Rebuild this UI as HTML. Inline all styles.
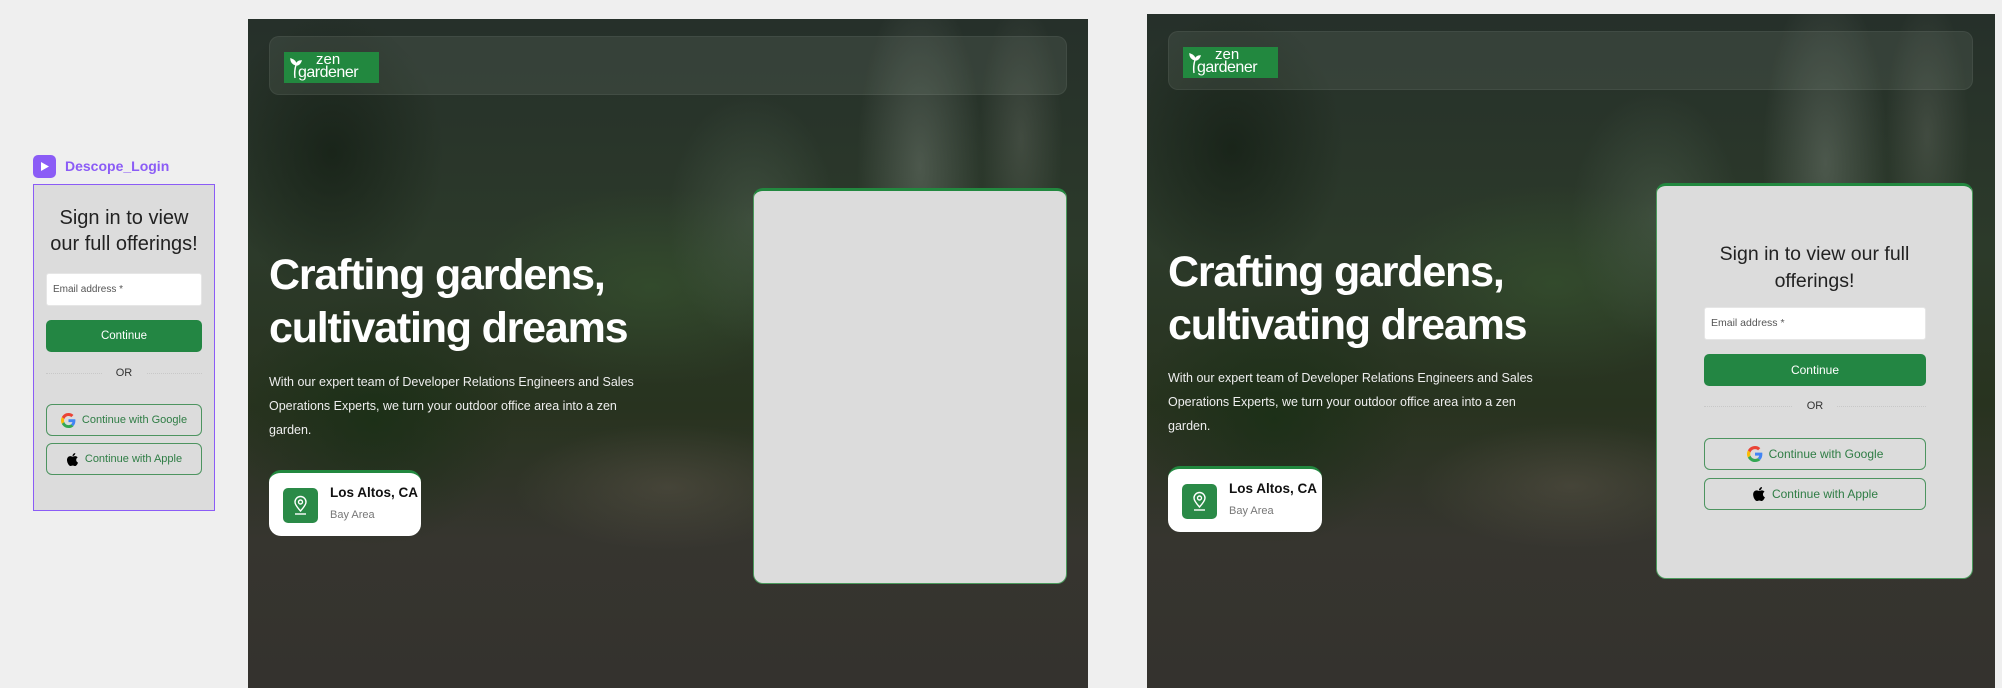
<!DOCTYPE html>
<html><head><meta charset="utf-8"><style>
*{box-sizing:border-box;margin:0;padding:0}
body{width:2002px;height:688px;background:#efefef;position:relative;overflow:hidden;font-family:"Liberation Sans",sans-serif}
.frame{position:absolute;overflow:hidden;
background:
radial-gradient(ellipse 90px 260px at 80% 22%, rgba(140,150,140,.35), transparent 70%),
radial-gradient(ellipse 60px 200px at 92% 18%, rgba(120,125,115,.3), transparent 70%),
radial-gradient(ellipse 120px 180px at 60% 30%, rgba(95,115,95,.35), transparent 70%),
radial-gradient(ellipse 260px 140px at 48% 40%, rgba(60,95,50,.45), transparent 70%),
radial-gradient(ellipse 220px 90px at 50% 70%, rgba(95,88,75,.45), transparent 70%),
radial-gradient(ellipse 200px 180px at 15% 60%, rgba(20,45,18,.6), transparent 70%),
radial-gradient(ellipse 160px 200px at 10% 20%, rgba(15,25,15,.6), transparent 70%),
linear-gradient(180deg,#26302a 0%,#2c3a2a 35%,#28331f 58%,#36352f 78%,#34322e 100%)}
.hdr{position:absolute;left:21px;top:17px;height:59px;border-radius:10px;background:rgba(150,165,150,.14);border:1px solid rgba(255,255,255,.06)}
.logo{position:absolute;left:14px;top:15px;width:95px;height:31px;background:#22883f;color:#fff;font-size:15px;line-height:12px}
.logo .z{position:absolute;left:32px;top:2px}
.logo .g{position:absolute;left:14px;top:15px;font-size:16px;letter-spacing:-.5px}
.h1{position:absolute;left:21px;color:#fff;font-size:43px;line-height:53px;font-weight:bold;letter-spacing:-1.2px}
.p{position:absolute;left:21px;color:#eee;font-size:12.5px;line-height:24px;width:390px}
.loc{position:absolute;left:21px;width:152px;height:66px;background:#fff;border-radius:12px;border-top:3px solid #22883f}
.loc .ic{position:absolute;left:14px;top:15px;width:35px;height:35px;background:#2a8a47;border-radius:5px}
.loc .t{position:absolute;left:61px;top:12px;font-size:13.5px;font-weight:bold;color:#111}
.loc .s{position:absolute;left:61px;top:36px;font-size:11px;color:#777}
.card{position:absolute;background:#dcdcdc;border-radius:10px;border:1px solid #4a9a5c;border-top:3px solid #22883f}
.title{position:absolute;left:0;right:0;text-align:center;color:#222;font-size:19.5px;line-height:27px}
.in{position:absolute;background:#fff;border-radius:3px;font-size:10.5px;color:#555;padding-left:6px;border:1px solid #e6e6e6}
.btn{position:absolute;background:#238643;color:#fff;border-radius:5px;text-align:center;font-size:12px}
.or{position:absolute;text-align:center;font-size:11px;color:#333}
.or:before{content:"";position:absolute;left:0;right:0;top:50%;border-top:1px dotted #c8c8c8}
.or span{position:relative;background:#dcdcdc;padding:0 14px}
.sb{position:absolute;border:1px solid #4d9460;border-radius:6px;color:#2f7d45;font-size:12px;display:flex;align-items:center;justify-content:center;gap:6px}
</style></head><body>

<div style="position:absolute;left:33px;top:155px;width:23px;height:23px;background:#8b5cf6;border-radius:5px"></div>
<svg style="position:absolute;left:38px;top:160px" width="13" height="13" viewBox="0 0 13 13"><path d="M3 2 L11 6.5 L3 11Z" fill="#fff"/></svg>
<div style="position:absolute;left:65px;top:158px;font-size:14px;color:#8b5cf6;font-weight:bold">Descope_Login</div>
<div style="position:absolute;left:33px;top:184px;width:182px;height:327px;background:#dcdcdc;border:1px solid #8b5cf6">
 <div class="title" style="top:20px;font-size:20px;line-height:26px">Sign in to view<br>our full offerings!</div>
 <div class="in" style="left:12px;top:88px;width:156px;height:33px;line-height:31px;font-size:10px">Email address *</div>
 <div class="btn" style="left:12px;top:135px;width:156px;height:32px;line-height:32px;font-size:11.5px">Continue</div>
 <div class="or" style="left:12px;top:181px;width:156px;height:14px;line-height:14px"><span>OR</span></div>
 <div class="sb" style="left:12px;top:219px;width:156px;height:32px;font-size:11px"><svg width="15" height="15" viewBox="0 0 48 48"><path fill="#EA4335" d="M24 9.5c3.5 0 6.6 1.2 9.1 3.6l6.8-6.8C35.8 2.4 30.3 0 24 0 14.6 0 6.6 5.4 2.7 13.3l7.9 6.1C12.5 13.7 17.8 9.5 24 9.5z"/><path fill="#4285F4" d="M46.1 24.5c0-1.6-.1-3.1-.4-4.5H24v9h12.4c-.5 2.9-2.2 5.4-4.7 7.1l7.6 5.9c4.4-4.1 6.8-10.1 6.8-17.5z"/><path fill="#FBBC05" d="M10.5 28.6c-.5-1.4-.8-3-.8-4.6s.3-3.2.8-4.6l-7.9-6.1C1 16.5 0 20.1 0 24s1 7.5 2.7 10.7l7.8-6.1z"/><path fill="#34A853" d="M24 48c6.5 0 11.9-2.1 15.9-5.8l-7.6-5.9c-2.1 1.4-4.9 2.3-8.3 2.3-6.200 0-11.5-4.2-13.4-9.9l-7.9 6.1C6.6 42.6 14.6 48 24 48z"/></svg>Continue with Google</div>
 <div class="sb" style="left:12px;top:258px;width:156px;height:32px;font-size:11px"><svg width="13" height="15" viewBox="0 0 384 512"><path d="M318.7 268.7c-.2-36.7 16.4-64.4 50-84.8-18.8-26.9-47.2-41.7-84.7-44.6-35.5-2.8-74.3 20.7-88.5 20.700-15 0-49.4-19.7-76.4-19.7C63.3 141.2 4 184.8 4 273.5q0 39.3 14.4 81.2c12.8 36.7 59 126.7 107.2 125.2 25.2-.6 43-17.9 75.8-17.9 31.8 0 48.3 17.9 76.4 17.9 48.6-.7 90.4-82.5 102.6-119.3-65.2-30.7-61.7-90-61.7-91.9zm-56.6-164.2c27.3-32.4 24.8-61.9 24-72.5-24.1 1.4-52 16.4-67.9 34.9-17.5 19.8-27.8 44.3-25.6 71.9 26.1 2 49.9-11.4 69.5-34.3z"/></svg>Continue with Apple</div>
</div>

<div class="frame" style="left:248px;top:19px;width:840px;height:669px">
 <div class="hdr" style="width:798px"><div class="logo"><svg style="position:absolute;left:4px;top:4px" width="14" height="24" viewBox="0 0 14 24"><path d="M7 22 C6 16 7 12 8 9 M8 9 C5 8 3 6 3 3 C6 4 8 6 8 9 M8 9 C9 6 11 5 13 5 C12 8 10 9 8 9" stroke="#fff" stroke-width="1.4" fill="#fff"/></svg><span class="z">zen</span><span class="g">gardener</span></div></div>
 <div class="h1" style="top:230px">Crafting gardens,<br>cultivating dreams</div>
 <div class="p" style="top:351px">With our expert team of Developer Relations Engineers and Sales Operations Experts, we turn your outdoor office area into a zen garden.</div>
 <div class="loc" style="top:451px"><div class="ic"><svg style="position:absolute;left:9px;top:7px" width="17" height="21" viewBox="0 0 17 21"><path d="M8.5 16 C4 11 3 9 3 7 A5.5 5.5 0 0 1 14 7 C14 9 13 11 8.5 16Z" fill="none" stroke="#fff" stroke-width="1.4"/><circle cx="8.5" cy="7" r="2" fill="none" stroke="#fff" stroke-width="1.4"/><path d="M3 19 H14" stroke="#fff" stroke-width="1.4"/></svg></div><div class="t">Los Altos, CA</div><div class="s">Bay Area</div></div>
 <div class="card" style="left:505px;top:169px;width:314px;height:396px"></div>
</div>

<div class="frame" style="left:1147px;top:14px;width:848px;height:674px">
 <div class="hdr" style="width:805px"><div class="logo"><svg style="position:absolute;left:4px;top:4px" width="14" height="24" viewBox="0 0 14 24"><path d="M7 22 C6 16 7 12 8 9 M8 9 C5 8 3 6 3 3 C6 4 8 6 8 9 M8 9 C9 6 11 5 13 5 C12 8 10 9 8 9" stroke="#fff" stroke-width="1.4" fill="#fff"/></svg><span class="z">zen</span><span class="g">gardener</span></div></div>
 <div class="h1" style="top:232px">Crafting gardens,<br>cultivating dreams</div>
 <div class="p" style="top:352px">With our expert team of Developer Relations Engineers and Sales Operations Experts, we turn your outdoor office area into a zen garden.</div>
 <div class="loc" style="top:452px;width:154px"><div class="ic"><svg style="position:absolute;left:9px;top:7px" width="17" height="21" viewBox="0 0 17 21"><path d="M8.5 16 C4 11 3 9 3 7 A5.5 5.5 0 0 1 14 7 C14 9 13 11 8.5 16Z" fill="none" stroke="#fff" stroke-width="1.4"/><circle cx="8.5" cy="7" r="2" fill="none" stroke="#fff" stroke-width="1.4"/><path d="M3 19 H14" stroke="#fff" stroke-width="1.4"/></svg></div><div class="t">Los Altos, CA</div><div class="s">Bay Area</div></div>
 <div class="card" style="left:509px;top:169px;width:317px;height:396px">
  <div class="title" style="top:55px">Sign in to view our full<br>offerings!</div>
  <div class="in" style="left:47px;top:121px;width:222px;height:33px;line-height:31px">Email address *</div>
  <div class="btn" style="left:47px;top:168px;width:222px;height:32px;line-height:32px">Continue</div>
  <div class="or" style="left:47px;top:213px;width:222px;height:14px;line-height:14px"><span>OR</span></div>
  <div class="sb" style="left:47px;top:252px;width:222px;height:32px"><svg width="16" height="16" viewBox="0 0 48 48"><path fill="#EA4335" d="M24 9.5c3.5 0 6.6 1.2 9.1 3.6l6.8-6.8C35.8 2.4 30.3 0 24 0 14.6 0 6.6 5.4 2.7 13.3l7.9 6.1C12.5 13.7 17.8 9.5 24 9.5z"/><path fill="#4285F4" d="M46.1 24.5c0-1.6-.1-3.1-.4-4.5H24v9h12.4c-.5 2.9-2.2 5.4-4.7 7.1l7.6 5.9c4.4-4.1 6.8-10.1 6.8-17.5z"/><path fill="#FBBC05" d="M10.5 28.6c-.5-1.4-.8-3-.8-4.6s.3-3.2.8-4.6l-7.9-6.1C1 16.5 0 20.1 0 24s1 7.5 2.7 10.7l7.8-6.1z"/><path fill="#34A853" d="M24 48c6.5 0 11.9-2.1 15.9-5.8l-7.6-5.9c-2.1 1.4-4.9 2.3-8.3 2.3-6.2 0-11.5-4.2-13.4-9.9l-7.9 6.1C6.6 42.6 14.6 48 24 48z"/></svg>Continue with Google</div>
  <div class="sb" style="left:47px;top:292px;width:222px;height:32px"><svg width="14" height="16" viewBox="0 0 384 512"><path d="M318.7 268.7c-.2-36.7 16.4-64.4 50-84.8-18.8-26.9-47.2-41.7-84.7-44.6-35.5-2.8-74.3 20.7-88.5 20.7-15 0-49.4-19.7-76.4-19.7C63.3 141.2 4 184.8 4 273.5q0 39.3 14.4 81.2c12.8 36.7 59 126.7 107.2 125.2 25.2-.6 43-17.9 75.8-17.9 31.8 0 48.3 17.9 76.4 17.9 48.6-.7 90.4-82.5 102.6-119.3-65.2-30.7-61.7-90-61.7-91.9zm-56.6-164.2c27.3-32.4 24.8-61.9 24-72.5-24.1 1.4-52 16.4-67.9 34.9-17.5 19.8-27.8 44.3-25.6 71.9 26.1 2 49.9-11.4 69.5-34.3z"/></svg>Continue with Apple</div>
 </div>
</div>
</body></html>
